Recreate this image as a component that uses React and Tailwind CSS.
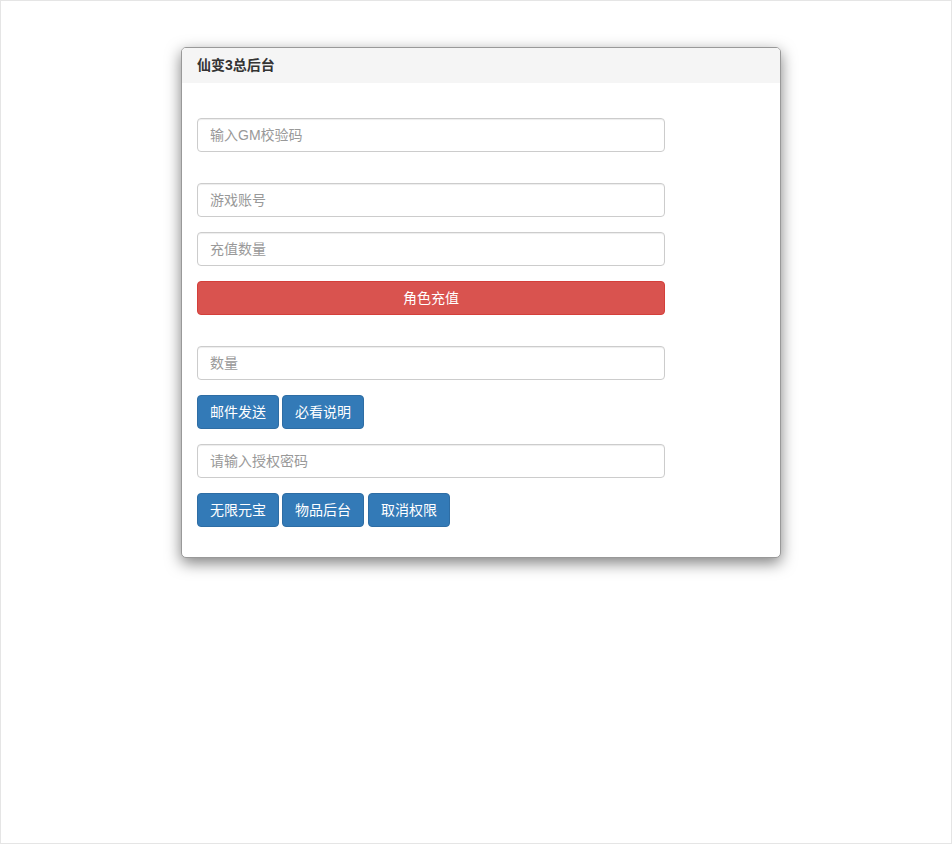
const FONT = { fontFamily: '"Helvetica Neue", Helvetica, Arial, "Liberation Sans", "Noto Sans CJK SC", sans-serif' };

function Field({ placeholder, className = "" }) {
  return (
    <input
      type="text"
      placeholder={placeholder}
      className={
        "block w-[468px] h-[34px] px-3 text-[14px] text-[#555] bg-white border border-[#ccc] rounded-[4px] shadow-[inset_0_1px_1px_rgba(0,0,0,0.075)] placeholder:text-[#999] outline-none " +
        className
      }
    />
  );
}

function BlueBtn({ children, className = "" }) {
  return (
    <button className={"h-[34px] w-[82px] text-[14px] text-white bg-[#337ab7] border border-[#2e6da4] rounded-[4px] " + className}>
      {children}
    </button>
  );
}

export default function App() {
  return (
    <div style={FONT} className="h-[844px] border border-[#e5e5e5] bg-white text-[#333]">
      <div className="ml-[180px] mt-[46px] w-[600px] bg-white border border-[#999] rounded-[5px] shadow-[0_5px_15px_rgba(0,0,0,0.5)] overflow-hidden">
        <div className="h-[35px] bg-[#f5f5f5] px-[15px] flex items-center">
          <h3 className="text-[14px] font-bold text-[#333]">仙变3总后台</h3>
        </div>
        <div className="px-[15px] pt-[35px] pb-[30px]">
          <Field placeholder="输入GM校验码" />
          <div className="mt-[31px] flex flex-col gap-[15px]">
            <Field placeholder="游戏账号" />
            <Field placeholder="充值数量" />
            <button className="w-[468px] h-[34px] text-[14px] text-white bg-[#d9534f] border border-[#d43f3a] rounded-[4px]">
              角色充值
            </button>
          </div>
          <div className="mt-[31px] flex flex-col gap-[15px]">
            <Field placeholder="数量" />
            <div className="flex gap-[3px]">
              <BlueBtn>邮件发送</BlueBtn>
              <BlueBtn>必看说明</BlueBtn>
            </div>
            <Field placeholder="请输入授权密码" />
            <div className="flex gap-[3px]">
              <BlueBtn>无限元宝</BlueBtn>
              <BlueBtn>物品后台</BlueBtn>
              <BlueBtn className="ml-[1px]">取消权限</BlueBtn>
            </div>
          </div>
        </div>
      </div>
    </div>
  );
}
